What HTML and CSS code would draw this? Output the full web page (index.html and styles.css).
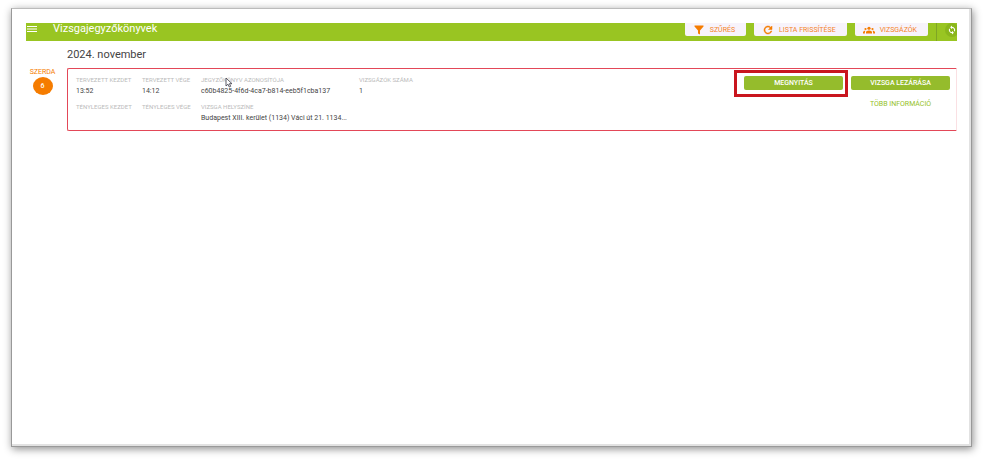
FILE: index.html
```html
<!DOCTYPE html>
<html lang="hu">
<head>
  <meta charset="UTF-8">
  <meta name="viewport" content="width=device-width, initial-scale=1">
  <title>Vizsgajegyzőkönyvek</title>
  <link rel="stylesheet" href="styles.css">
</head>
<body>
  <div class="frame">
    <header class="topbar">
      <button type="button" class="menu-btn" aria-label="Menü">
        <svg viewBox="0 0 10 8" width="10" height="8"><path d="M0 1.5h10M0 4h10M0 6.5h10" stroke="#fff" stroke-width="1.1"/></svg>
      </button>
      <h1>Vizsgajegyzőkönyvek</h1>
      <div class="actions">
        <button type="button" class="action-btn">
          <svg viewBox="0 0 24 24" width="12" height="12"><path d="M3 3h18v2l-7 8v8l-4-2v-6L3 5z"/></svg>
          Szűrés
        </button>
        <button type="button" class="action-btn">
          <svg viewBox="0 0 24 24" width="12" height="12"><path d="M17.65 6.35A8 8 0 1 0 19.73 14h-2.08A6 6 0 1 1 12 6c1.66 0 3.14.69 4.22 1.78L13 11h7V4z" stroke="#f57c00"/></svg>
          Lista frissítése
        </button>
        <button type="button" class="action-btn">
          <svg viewBox="0 0 24 24" width="12" height="12"><circle cx="12" cy="8.5" r="3.2"/><circle cx="5" cy="10" r="2.2"/><circle cx="19" cy="10" r="2.2"/><path d="M6 19v-2.500c0-2 2.700-3.500 6-3.500s6 1.500 6 3.500V19zM0 19v-2.500C0 14.500 2 13.300 5 13.300c-.8.900-1.200 1.900-1.200 3.200V19zM24 19v-2.500c0-2-2-3.200-5-3.200.8.900 1.200 1.900 1.200 3.200V19z"/></svg>
          Vizsgázók
        </button>
      </div>
      <button type="button" class="sync-btn" aria-label="Szinkronizálás">
        <svg viewBox="0 0 24 24"><path d="M12 4V1L7.500 5.500 12 10V7a5 5 0 0 1 4.600 7l1.900 1.900A8 8 0 0 0 12 4zM12 17a5 5 0 0 1-4.600-7L5.500 8.100A8 8 0 0 0 12 20v3l4.500-4.500L12 14z"/></svg>
      </button>
    </header>

    <main class="content">
      <h2>2024. november</h2>
      <div class="day-row">
        <div class="day">
          <span class="day-name">Szerda</span>
          <span class="day-number">6</span>
        </div>

        <section class="exam">
          <dl class="details">
            <div><dt>Tervezett kezdet</dt><dd>13:52</dd></div>
            <div><dt>Tervezett vége</dt><dd>14:12</dd></div>
            <div class="with-cursor">
              <dt>Jegyzőkönyv azonosítója</dt><dd>c60b4825-4f6d-4ca7-b814-eeb5f1cba137</dd>
              <svg class="cursor" viewBox="0 0 8 11" width="8" height="11"><path d="M1 1v8l2-1.800L4.300 10l1.400-.7-1.300-2.600H7z" fill="#fff" stroke="#4a4a55" stroke-width=".9"/></svg>
            </div>
            <div><dt>Vizsgázók száma</dt><dd>1</dd></div>
            <div><dt>Tényleges kezdet</dt><dd></dd></div>
            <div><dt>Tényleges vége</dt><dd></dd></div>
            <div><dt>Vizsga helyszíne</dt><dd>Budapest XIII. kerület (1134) Váci út 21. 1134...</dd></div>
          </dl>
          <div class="exam-actions">
            <div class="highlight">
              <button type="button" class="main-btn">Megnyitás</button>
            </div>
            <button type="button" class="main-btn">Vizsga lezárása</button>
            <button type="button" class="info-btn">Több információ</button>
          </div>
        </section>
      </div>
    </main>
  </div>
</body>
</html>
```

FILE: styles.css
```css
* {
  box-sizing: border-box;
}
body {
  margin: 0;
  padding: 8px 11px 15px;
  background: #fff;
  color: #444;
  font-family: Roboto, "Liberation Sans", sans-serif;
  font-size: 7px;
}
h1, h2, dl, dd {
  margin: 0;
}
button {
  padding: 0;
  border: none;
  background: none;
  font: inherit;
  text-transform: uppercase;
  cursor: pointer;
}
svg {
  display: block;
}
.frame {
  min-height: calc(100vh - 23px);
  padding: 14px;
  border: 1px solid #999;
  border-top-color: #bbb;
  background: #fff;
  box-shadow: inset -1px -1px 0 1px #e2e2e2, 1px 2px 8px rgba(0, 0, 0, 0.45);
}

/* header */
.topbar {
  display: flex;
  align-items: flex-start;
  height: 18px;
  background: #99c522;
  color: #fff;
  overflow: hidden;
}
.menu-btn {
  width: 27px;
  padding: 2px 1px;
}
h1 {
  font-size: 11px;
  line-height: 12px;
  font-weight: 400;
}
.actions {
  display: flex;
  gap: 8px;
  margin-left: auto;
  padding-right: 8px;
}
.action-btn {
  display: flex;
  align-items: center;
  gap: 5px;
  height: 13px;
  padding: 0 11px 0 8px;
  border-radius: 0 0 2px 2px;
  background: #f7f3fb;
  color: #f5821f;
}
.action-btn svg {
  fill: #f57c00;
}
.sync-btn {
  width: 21px;
  height: 18px;
  padding-left: 8px;
  border-left: 1px solid #7fa525;
}
.sync-btn svg {
  width: 14px;
  height: 14px;
  margin-bottom: 4px;
  padding: 2px;
  border-radius: 50%;
  background: #8ab61c;
  fill: #fff;
}

/* exam list */
h2 {
  padding: 7px 0 7px 41px;
  font-size: 11px;
  line-height: 13px;
  font-weight: 400;
}
.day-row {
  display: flex;
  gap: 8px;
}
.day {
  display: flex;
  flex-direction: column;
  align-items: center;
  width: 33px;
  color: #f57c00;
}
.day-name {
  line-height: 9px;
  text-transform: uppercase;
}
.day-number {
  width: 20px;
  height: 18px;
  border-radius: 50%;
  background: #f57c00;
  color: #fff;
  font-weight: 500;
  line-height: 18px;
  text-align: center;
}
.exam {
  display: flex;
  flex: 1;
  justify-content: space-between;
  align-items: flex-start;
  padding: 6px;
  border: 1px solid #e34858;
  border-right-color: #fae0e3;
  border-radius: 2px 0 0 2px;
}
.details {
  display: grid;
  grid-template-columns: 58px 51px 150px auto;
  gap: 5px 8px;
  padding-left: 2px;
}
.details dt {
  color: #bbb;
  font-size: 6px;
  line-height: 9px;
  text-transform: uppercase;
  white-space: nowrap;
}
.details dd {
  padding-top: 1px;
  line-height: 12px;
  white-space: nowrap;
}
.with-cursor {
  position: relative;
}
.cursor {
  position: absolute;
  left: 24px;
  top: 2px;
}
.exam-actions {
  display: grid;
  grid-template-columns: 99px 99px;
  gap: 9px 8px;
  padding-top: 1px;
}
.main-btn {
  width: 100%;
  height: 14px;
  border-radius: 2px;
  background: #95bc2c;
  color: #fff;
  font-weight: 500;
}
.highlight {
  position: relative;
}
.highlight::after {
  content: "";
  position: absolute;
  inset: -6px -5px -7px -10px;
  border: 3px solid #c9151e;
  pointer-events: none;
}
.info-btn {
  grid-column: 2;
  color: #95c11f;
  line-height: 10px;
}
```
